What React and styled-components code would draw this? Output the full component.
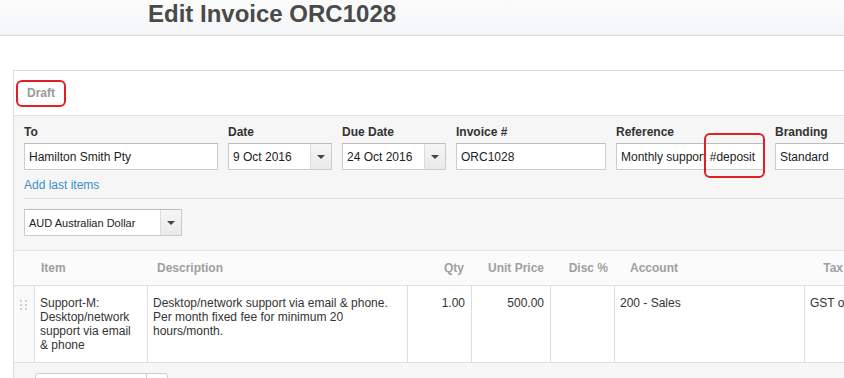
import React from "react";
import styled, { createGlobalStyle } from "styled-components";

const GlobalStyle = createGlobalStyle`
  html, body {
    margin: 0;
    padding: 0;
    background: #fff;
    font-family: "Liberation Sans", Arial, sans-serif;
    color: #333;
    overflow: hidden;
  }
`;

const Page = styled.div`
  width: 844px;
  height: 378px;
  overflow: hidden;
`;

const Header = styled.header`
  height: 35px;
  border-bottom: 1px solid #d6d8db;
  background: linear-gradient(#fafbfa, #f4f5f7);
  padding-left: 148px;
`;

const Title = styled.h1`
  margin: 0;
  font-size: 24px;
  line-height: 27px;
  font-weight: bold;
  color: #4a4a4a;
`;

const Panel = styled.section`
  margin: 34px 0 0 13px;
  width: 920px;
  border: 1px solid #dcdcdc;
  border-right: none;
`;

const StatusBar = styled.div`
  height: 44px;
  display: flex;
  align-items: center;
  padding-left: 2px;
  border-bottom: 1px solid #e2e2e2;
`;

const Callout = styled.span`
  display: inline-flex;
  align-items: center;
  box-sizing: border-box;
  border: 2px solid #e31e24;
  border-radius: 6px;
`;

const DraftMark = styled(Callout)`
  width: 50px;
  height: 27px;
  padding-left: 9px;
  font-size: 12px;
  font-weight: bold;
  color: #9a9a9a;
`;

const FormArea = styled.div`
  background: #f6f6f6;
  padding: 9px 0 14px 10px;
`;

const Fields = styled.div`
  display: grid;
  grid-template-columns: 194px 104px 104px 150px 149px 150px;
  column-gap: 10px;
`;

const Field = styled.div`
  position: relative;
`;

const Label = styled.div`
  font-size: 12px;
  font-weight: bold;
  color: #333;
  line-height: 15px;
  margin-bottom: 3px;
`;

const Box = styled.div`
  box-sizing: border-box;
  display: flex;
  width: ${(p) => p.$width || "100%"};
  height: 27px;
  background: #fff;
  border: 1px solid #ccc;
  border-top-color: #bdbdbd;
`;

const Value = styled.div`
  flex: 1;
  display: flex;
  align-items: center;
  padding-left: 4px;
  font-size: ${(p) => p.$size || 12}px;
  color: #222;
  white-space: nowrap;
  overflow: hidden;
`;

const DropButton = styled.div`
  width: 20px;
  border-left: 1px solid #dcdcdc;
  background: linear-gradient(#f6f6f6, #e9e9eb);
  display: flex;
  align-items: center;
  justify-content: center;

  &::after {
    content: "";
    border-left: 4px solid transparent;
    border-right: 4px solid transparent;
    border-top: 4px solid #444;
  }
`;

const DepositMark = styled(Callout)`
  position: absolute;
  left: 88px;
  top: 8px;
  width: 61px;
  height: 45px;
`;

const AddLink = styled.a`
  display: block;
  margin-top: 8px;
  font-size: 12px;
  line-height: 15px;
  color: #3a8fc8;
  text-decoration: none;
`;

const Divider = styled.div`
  border-top: 1px solid #dddddd;
  margin: 5px 0 10px;
`;

const TABLE_COLS = "20px 113px 260px 64px 79px 64px 190px 46px 1fr";

const HeadRow = styled.div`
  display: grid;
  grid-template-columns: ${TABLE_COLS};
  height: 34px;
  background: #fbfbfb;
  border-top: 1px solid #e4e4e4;
  border-bottom: 1px solid #e0e0e0;
`;

const HeadCell = styled.div`
  display: flex;
  align-items: center;
  justify-content: ${(p) => (p.$right ? "flex-end" : "flex-start")};
  padding: ${(p) => p.$pad || "0"};
  font-size: 12px;
  font-weight: bold;
  color: #a0a0a0;
  white-space: nowrap;
`;

const LineRow = styled.div`
  display: grid;
  grid-template-columns: ${TABLE_COLS};
  height: 76px;
  background: #fff;
  border-bottom: 1px solid #e0e0e0;
`;

const Handle = styled.div`
  background: #fafafa;
  display: grid;
  grid-template-columns: repeat(2, 2px);
  grid-auto-rows: 2px;
  gap: 2px 3px;
  align-content: start;
  padding: 14px 0 0 6px;

  span {
    background: #cfcfcf;
  }
`;

const Cell = styled.div`
  border-left: 1px solid #dedede;
  padding: 10px ${(p) => (p.$right ? "6px" : "5px")} 0 5px;
  font-size: 12px;
  line-height: 14px;
  color: #333;
  text-align: ${(p) => (p.$right ? "right" : "left")};
  white-space: ${(p) => (p.$nowrap ? "nowrap" : "normal")};
  grid-column: ${(p) => p.$span || "auto"};
`;

const Footer = styled.div`
  background: #f6f6f6;
  height: 40px;
  padding: 10px 0 0 21px;
`;

const AddLine = styled.div`
  box-sizing: border-box;
  display: flex;
  width: 133px;
  height: 27px;
  background: #fff;
  border: 1px solid #cfcfcf;
  border-radius: 3px;

  span:last-child {
    width: 20px;
    border-left: 1px solid #cfcfcf;
  }
  span:first-child {
    flex: 1;
  }
`;

function Select({ value, width, size }) {
  return (
    <Box $width={width}>
      <Value $size={size}>{value}</Value>
      <DropButton />
    </Box>
  );
}

export default function App() {
  return (
    <Page>
      <GlobalStyle />
      <Header>
        <Title>Edit Invoice ORC1028</Title>
      </Header>
      <Panel>
        <StatusBar>
          <DraftMark>Draft</DraftMark>
        </StatusBar>
        <FormArea>
          <Fields>
            <Field>
              <Label>To</Label>
              <Box>
                <Value>Hamilton Smith Pty</Value>
              </Box>
            </Field>
            <Field>
              <Label>Date</Label>
              <Select value="9 Oct 2016" />
            </Field>
            <Field>
              <Label>Due Date</Label>
              <Select value="24 Oct 2016" />
            </Field>
            <Field>
              <Label>Invoice #</Label>
              <Box>
                <Value>ORC1028</Value>
              </Box>
            </Field>
            <Field>
              <Label>Reference</Label>
              <Box>
                <Value>Monthly support #deposit</Value>
              </Box>
              <DepositMark />
            </Field>
            <Field>
              <Label>Branding</Label>
              <Box>
                <Value>Standard</Value>
              </Box>
            </Field>
          </Fields>
          <AddLink href="#">Add last items</AddLink>
          <Divider />
          <Select value="AUD Australian Dollar" width="158px" size={11} />
        </FormArea>
        <HeadRow>
          <div />
          <HeadCell $pad="0 0 0 7px">Item</HeadCell>
          <HeadCell $pad="0 0 0 10px">Description</HeadCell>
          <HeadCell $right $pad="0 7px 0 0">Qty</HeadCell>
          <HeadCell $right $pad="0 6px 0 0">Unit Price</HeadCell>
          <HeadCell $right $pad="0 6px 0 0">Disc %</HeadCell>
          <HeadCell $pad="0 0 0 16px">Account</HeadCell>
          <HeadCell $right $pad="0 7px 0 0">Tax</HeadCell>
        </HeadRow>
        <LineRow>
          <Handle>
            <span /><span /><span /><span /><span /><span />
          </Handle>
          <Cell>Support-M: Desktop/network support via email &amp; phone</Cell>
          <Cell>
            Desktop/network support via email &amp; phone. Per month fixed fee
            for minimum 20 hours/month.
          </Cell>
          <Cell $right>1.00</Cell>
          <Cell $right>500.00</Cell>
          <Cell $right />
          <Cell>200 - Sales</Cell>
          <Cell $nowrap $span="8 / 10">GST on Income</Cell>
        </LineRow>
        <Footer>
          <AddLine>
            <span />
            <span />
          </AddLine>
        </Footer>
      </Panel>
    </Page>
  );
}
